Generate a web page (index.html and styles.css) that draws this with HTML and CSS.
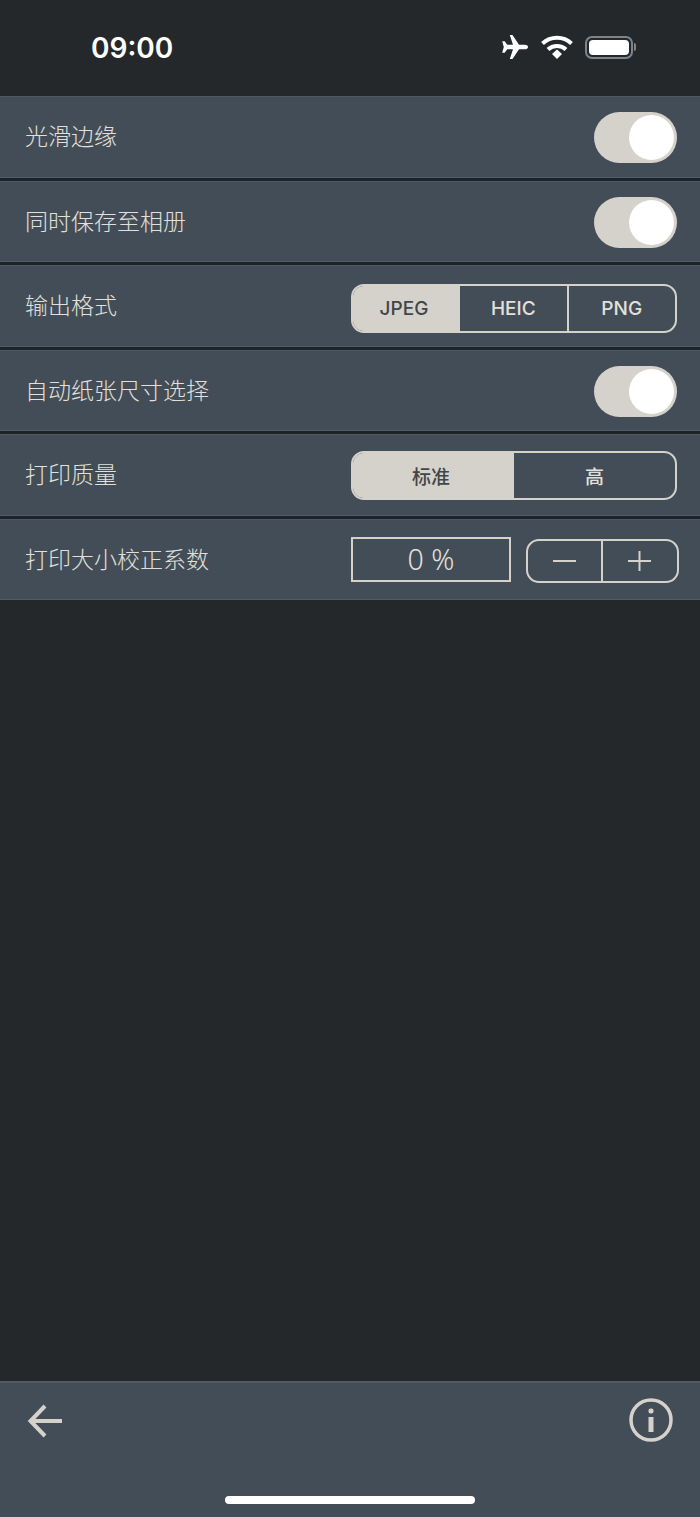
FILE: index.html
```html
<!DOCTYPE html>
<html lang="zh-CN">
<head>
    <meta charset="UTF-8">
    <meta name="viewport" content="width=device-width, initial-scale=1.0">
    <title>设置</title>
    <link rel="stylesheet" href="styles.css">
</head>
<body>
    <div class="app">
        <!-- Status bar -->
        <div class="status-bar">
            <span class="time">09:00</span>
            <div class="status-icons">
                <svg class="icon-plane" width="28" height="26" viewBox="0 0 28 26">
                    <path d="M27 13c0-1.500-1.500-2.300-3-2.300h-6L11.500 1H8.800l3.200 9.700H6.300L3.700 7.300H1.200L2.800 13 1.200 18.700h2.500l2.600-3.400H12L8.800 25h2.700L18 15.300h6c1.500 0 3-.8 3-2.300z" fill="#fff"/>
                </svg>
                <svg class="icon-wifi" width="32" height="24" viewBox="0 0 32 24">
                    <path d="M1.500 8.500a21 21 0 0 1 29 0" fill="none" stroke="#fff" stroke-width="4"/>
                    <path d="M7 14.500a13 13 0 0 1 18 0" fill="none" stroke="#fff" stroke-width="4"/>
                    <path d="M11 19l5-4.500 5 4.500-5 5z" fill="#fff"/>
                </svg>
                <div class="battery">
                    <div class="battery-body"><div class="battery-fill"></div></div>
                    <div class="battery-cap"></div>
                </div>
            </div>
        </div>

        <!-- Settings -->
        <div class="settings">
            <div class="row">
                <span class="row-label">光滑边缘</span>
                <div class="toggle"><div class="knob"></div></div>
            </div>
            <div class="row">
                <span class="row-label">同时保存至相册</span>
                <div class="toggle"><div class="knob"></div></div>
            </div>
            <div class="row">
                <span class="row-label">输出格式</span>
                <div class="segments format">
                    <div class="segment active">JPEG</div>
                    <div class="segment">HEIC</div>
                    <div class="segment">PNG</div>
                </div>
            </div>
            <div class="row">
                <span class="row-label">自动纸张尺寸选择</span>
                <div class="toggle"><div class="knob"></div></div>
            </div>
            <div class="row">
                <span class="row-label">打印质量</span>
                <div class="segments quality">
                    <div class="segment active">标准</div>
                    <div class="segment">高</div>
                </div>
            </div>
            <div class="row last">
                <span class="row-label">打印大小校正系数</span>
                <div class="scale">
                    <div class="scale-value">0 %</div>
                    <div class="stepper">
                        <div class="step">
                            <svg width="24" height="24" viewBox="0 0 24 24"><path d="M0 12h23" stroke="#d5d2cc" stroke-width="2"/></svg>
                        </div>
                        <div class="step">
                            <svg width="24" height="24" viewBox="0 0 24 24"><path d="M0 12h23M11.500 2v20" stroke="#d5d2cc" stroke-width="2"/></svg>
                        </div>
                    </div>
                </div>
            </div>
        </div>

        <!-- Bottom bar -->
        <div class="bottom-bar">
            <div class="bottom-icons">
                <svg class="back-icon" width="36" height="36" viewBox="0 0 36 36">
                    <path d="M35 18H4M18 3L3.500 18 18 33" fill="none" stroke="#d5d2cc" stroke-width="4"/>
                </svg>
                <svg width="44" height="44" viewBox="0 0 44 44">
                    <circle cx="22" cy="22" r="20" fill="none" stroke="#d5d2cc" stroke-width="3.500"/>
                    <rect x="19.500" y="19" width="5" height="15" fill="#d5d2cc"/>
                    <rect x="19.500" y="10.500" width="5" height="5" rx="2" fill="#d5d2cc"/>
                </svg>
            </div>
            <div class="home-indicator"></div>
        </div>
    </div>
</body>
</html>
```

FILE: styles.css
```css
html, body {
    margin: 0;
    padding: 0;
    height: 100%;
}
body {
    background-color: #24282b;
    color: #d5d2cc;
    font-family: "Noto Sans CJK SC", "Noto Sans", sans-serif;
}
.app {
    display: flex;
    flex-direction: column;
    height: 1517px;
}
.status-bar {
    height: 96px;
    box-sizing: border-box;
    display: flex;
    justify-content: space-between;
    align-items: flex-start;
    padding: 31px 64px 0 91px;
    color: white;
}
.time {
    font-family: Inter, sans-serif;
    font-size: 28px;
    font-weight: 600;
    line-height: 34px;
}
.status-icons {
    display: flex;
    align-items: center;
    gap: 12px;
    margin-top: 3px;
}
.battery {
    display: flex;
    align-items: center;
    gap: 1px;
}
.battery-body {
    width: 48px;
    height: 23px;
    box-sizing: border-box;
    border: 2px solid #7d858c;
    border-radius: 7px;
    padding: 2px;
}
.battery-fill {
    height: 100%;
    background-color: white;
    border-radius: 4px;
}
.battery-cap {
    width: 2px;
    height: 8px;
    background-color: #7d858c;
    border-radius: 0 2px 2px 0;
}
.settings {
    display: flex;
    flex-direction: column;
    gap: 3px;
    background-color: #1c2329;
}
.row {
    height: 81.500px;
    box-sizing: border-box;
    display: flex;
    justify-content: space-between;
    align-items: center;
    padding: 0 23px 0 25px;
    background-color: #434d57;
    border-top: 1px solid #4f5963;
    border-bottom: 1px solid #525c66;
}
.row.last {
    padding-right: 21px;
}
.row-label {
    font-size: 23px;
    font-weight: 300;
    color: #e2e0db;
    margin-bottom: 3px;
}
.toggle {
    width: 83px;
    height: 51px;
    box-sizing: border-box;
    background-color: #d5d2cc;
    border-radius: 26px;
    padding: 3px;
    display: flex;
    justify-content: flex-end;
    margin-top: 2px;
}
.knob {
    width: 45px;
    height: 45px;
    background-color: white;
    border-radius: 50%;
}
.segments {
    width: 326px;
    height: 49px;
    box-sizing: border-box;
    display: flex;
    border: 2px solid #d5d2cc;
    border-radius: 13px;
    overflow: hidden;
}
.segments.format {
    margin-top: 6px;
}
.segments.quality {
    margin-top: 2px;
}
.segment {
    display: flex;
    align-items: center;
    justify-content: center;
    font-family: Inter, "Noto Sans CJK SC", sans-serif;
    font-size: 19px;
    font-weight: 500;
    border-left: 2px solid #d5d2cc;
    color: #e2e0db;
}
.segment:first-child {
    border-left: none;
}
.segment.active {
    background-color: #d5d2cc;
    color: #41464b;
    padding-right: 3px;
    box-sizing: border-box;
}
.format .segment {
    flex: 1;
}
.format .segment.active {
    flex: 0 0 105px;
}
.quality .segment {
    flex: 1;
}
.quality .segment.active {
    flex: 0 0 159px;
}
.scale {
    display: flex;
    align-items: center;
    gap: 15px;
}
.scale-value {
    width: 160px;
    height: 45px;
    box-sizing: border-box;
    display: flex;
    align-items: center;
    justify-content: center;
    border: 2px solid #d5d2cc;
    font-family: "Noto Sans", sans-serif;
    font-size: 28.500px;
    font-weight: 300;
    color: #e2e0db;
}
.stepper {
    width: 153px;
    height: 44px;
    box-sizing: border-box;
    display: flex;
    border: 2px solid #d5d2cc;
    border-radius: 13px;
    margin-top: 4px;
}
.step {
    flex: 1;
    display: flex;
    align-items: center;
    justify-content: center;
}
.step:first-child {
    flex: 0 0 73px;
}
.step + .step {
    border-left: 2px solid #d5d2cc;
}
.bottom-bar {
    margin-top: auto;
    height: 136px;
    box-sizing: border-box;
    background-color: #434d57;
    border-top: 2px solid #4f5b63;
    position: relative;
}
.bottom-icons {
    display: flex;
    justify-content: space-between;
    align-items: center;
    padding: 15px 27px 0 27px;
}
.back-icon {
    margin-top: 2px;
}
.home-indicator {
    position: absolute;
    left: 225px;
    bottom: 13px;
    width: 250px;
    height: 8px;
    background-color: white;
    border-radius: 4px;
}
```
